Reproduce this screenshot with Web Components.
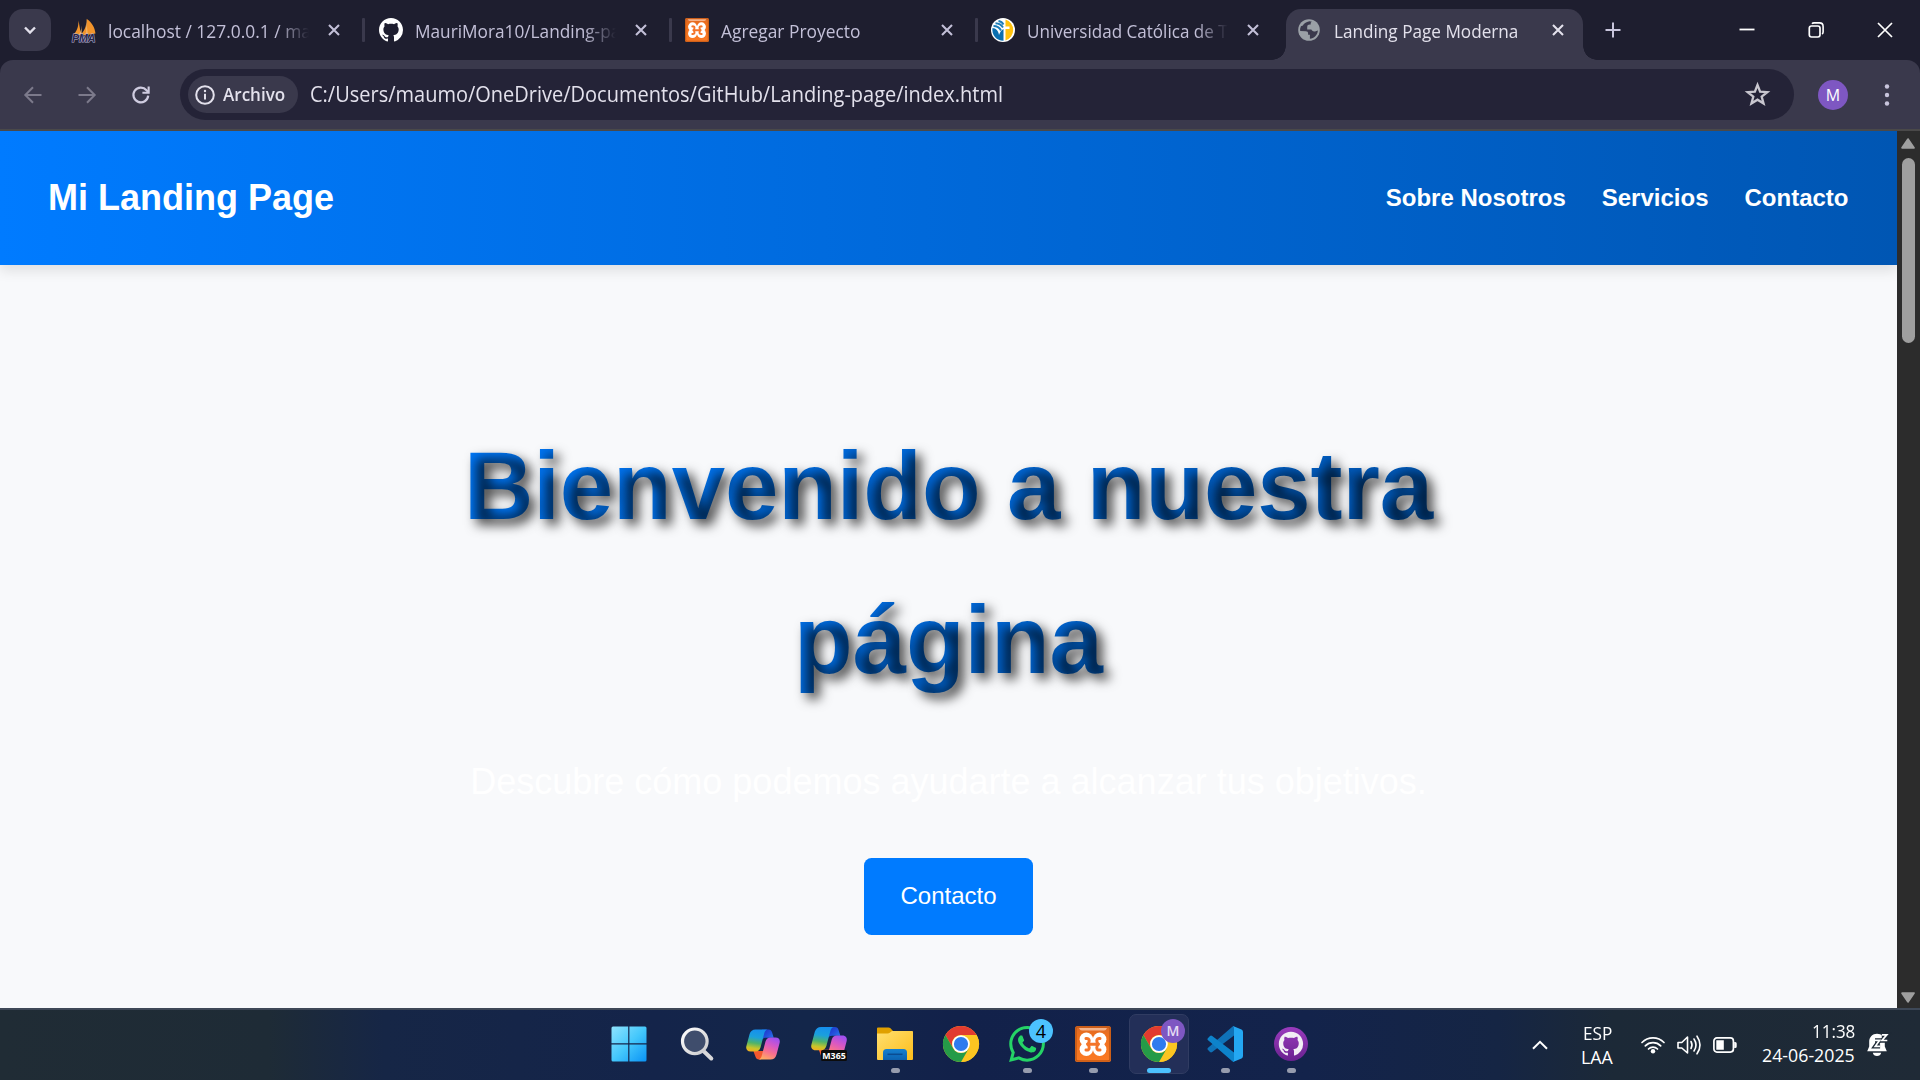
<!DOCTYPE html>
<html lang="es">
<head>
<meta charset="utf-8">
<title>Landing Page Moderna</title>
<style>
html,body{margin:0;height:100%;overflow:hidden;background:#1e1e2f}
body{font-family:"Open Sans","Noto Sans",sans-serif}
</style>
</head>
<body>
<desktop-screen></desktop-screen>
<script>
const svg=(vb,body)=>`<svg viewBox="${vb}" width="100%" height="100%" fill="none">${body}</svg>`;
const GH='<path fill="currentColor" d="M8 0C3.58 0 0 3.58 0 8c0 3.54 2.29 6.53 5.47 7.59.4.07.55-.17.55-.38 0-.19-.01-.82-.01-1.49-2.01.37-2.53-.49-2.69-.94-.09-.23-.48-.94-.82-1.13-.28-.15-.68-.52-.01-.53.63-.01 1.08.58 1.23.82.72 1.21 1.87.87 2.33.66.07-.52.28-.87.51-1.07-1.78-.2-3.64-.89-3.64-3.95 0-.87.31-1.59.82-2.15-.08-.2-.36-1.02.08-2.12 0 0 .67-.21 2.2.82.64-.18 1.32-.27 2-.27.68 0 1.36.09 2 .27 1.53-1.04 2.2-.82 2.2-.82.44 1.1.16 1.92.08 2.12.51.56.82 1.27.82 2.15 0 3.07-1.87 3.75-3.65 3.95.29.25.54.73.54 1.48 0 1.07-.01 1.93-.01 2.2 0 .21.15.46.55.38A8.013 8.013 0 0016 8c0-4.42-3.58-8-8-8z"/>';
const COPILOT=`<defs>
<linearGradient id="ca" x1=".5" y1="0" x2=".35" y2="1"><stop stop-color="#168fee"/><stop offset=".35" stop-color="#1ba0dc"/><stop offset=".62" stop-color="#4fb36a"/><stop offset=".85" stop-color="#c9c52a"/><stop offset="1" stop-color="#f0b020"/></linearGradient>
<linearGradient id="cb" x1=".7" y1="0" x2=".3" y2="1"><stop stop-color="#a050f0"/><stop offset=".35" stop-color="#d858c4"/><stop offset=".65" stop-color="#f8708e"/><stop offset="1" stop-color="#ffaa62"/></linearGradient>
<linearGradient id="cc" x1="0" y1="0" x2="1" y2="1"><stop stop-color="#1a2fc0"/><stop offset=".5" stop-color="#2450dc"/><stop offset="1" stop-color="#2a8af0"/></linearGradient></defs>
<path fill="url(#cc)" d="M16 0h6.500c2 0 3 1 3.600 3l1.600 5.200H20c-2.500 0-4.200 1.200-5 3.300z"/>
<path fill="#f4582e" d="M8 21.500h10l-3 8.500h-2c-2 0-3-1-3.600-3L7.500 22z"/>
<path fill="url(#ca)" d="M9.500 0h12c-2 .4-2.700 2-3.300 4L14.500 18c-.9 2.700-2.500 4-5 4h-5C1 22-.4 19.500.4 16.500L3.600 4.500C4.600 1.500 6.500 0 9.500 0z"/>
<path fill="url(#cb)" d="M24.500 30h-12c2-.4 2.700-2 3.300-4L19.500 12c.9-2.700 2.500-4 5-4h5c3.500 0 4.900 2.500 4.100 5.500L30.400 25.500c-1 3-2.900 4.500-5.900 4.500z"/>`;
const XAMPP=`<defs><linearGradient id="xg" x1="0" y1="0" x2="0" y2="1"><stop stop-color="#d9692a"/><stop offset=".25" stop-color="#ef6f1c"/><stop offset="1" stop-color="#fb7a24"/></linearGradient></defs>
<rect width="36" height="36" rx="2.500" fill="url(#xg)"/><rect x="1" y="1" width="34" height="34" rx="2" stroke="#c35a16" stroke-width="1.600"/><path d="M4 2h28q-1 2.500-3 2.500H7Q5 4.500 4 2z" fill="#f6b48a"/>
<g fill="#fff"><circle cx="11.300" cy="13.200" r="6.700"/><circle cx="24.700" cy="13.200" r="6.700"/><circle cx="11.300" cy="23.300" r="6.700"/><circle cx="24.700" cy="23.300" r="6.700"/><path d="M8 12h20v12.500H8z"/></g>
<path d="M3.500 18.200l2 1.200v-2.400zM32.500 18.200l-2 1.200v-2.400z" fill="#f4752a"/>
<path d="M11 12.600q3.200-.4 3.200 2.200t-1.700 3.400q1.700 1 1.700 3.600T11 24M25 12.600q-3.200-.4-3.200 2.200t1.700 3.400q-1.700 1-1.700 3.600T25 24M13.500 18.200h9" stroke="#f4752a" stroke-width="3" stroke-linecap="round" stroke-linejoin="round"/>`;
const ICONS={
 chev:svg('0 0 14 14','<path d="M2 4.500l5 5 5-5" stroke="#e3e1ec" stroke-width="2.400"/>'),
 x:svg('0 0 12 12','<path d="M1 1l10 10M11 1L1 11" stroke="currentColor" stroke-width="2.100"/>'),
 wx:svg('0 0 16 16','<path d="M1 1l14 14M15 1L1 15" stroke="#fff" stroke-width="1.700"/>'),
 min:svg('0 0 16 16','<path d="M.5 7.500h15" stroke="#fff" stroke-width="1.800"/>'),
 restore:svg('0 0 16 16','<rect x="1.300" y="4" width="10.700" height="11" rx="2.200" stroke="#fff" stroke-width="1.700"/><path d="M4 1.700c.5-.6 1-.8 2-.8h5.500c2.200 0 3.600 1.500 3.600 3.600V10c0 1-.3 1.500-1 2" stroke="#fff" stroke-width="1.600"/>'),
 plus:svg('0 0 16 16','<path d="M8 .5v15M.5 8h15" stroke="#c8c5dc" stroke-width="2"/>'),
 back:svg('0 0 18 18','<path d="M17.500 9H1.500M9 1.300L1.300 9 9 16.700" stroke="#7c7a8b" stroke-width="2"/>'),
 fwd:svg('0 0 18 18','<path d="M.5 9h16M9 1.300L16.700 9 9 16.700" stroke="#7c7a8b" stroke-width="2"/>'),
 reload:svg('0 0 18 18','<path d="M16.200 9.700A7.400 7.400 0 1 1 14.500 4.200L16.500 6.300" stroke="#cfcce0" stroke-width="2.200"/><path d="M17.700.5v7.300h-7.300V5.700h5.200V.5z" fill="#cfcce0"/>'),
 info:svg('0 0 20 20','<circle cx="10" cy="10" r="8.800" stroke="#e3e1ec" stroke-width="2"/><path d="M10 8.700v5.800" stroke="#e3e1ec" stroke-width="2"/><circle cx="10" cy="6" r="1.200" fill="#e3e1ec"/>'),
 star:svg('0 0 24 24','<path d="M12 2.800l2.500 6.500 6.900.4-5.400 4.300 1.800 6.700L12 17l-5.800 3.700L8 14 2.600 9.700l6.900-.4z" stroke="#c9c7cf" stroke-width="2.200"/>'),
 dots:svg('0 0 6 24','<g fill="#c8c5dc"><circle cx="3" cy="3.500" r="2.200"/><circle cx="3" cy="12" r="2.200"/><circle cx="3" cy="20.500" r="2.200"/></g>'),
 gh:svg('0 0 16 16',GH),
 pma:svg('0 0 24 24','<path fill="#f2942b" d="M6.500 2.500C6.500 9 5 13 .8 17.500L9 16.500zM14 0c1 6-.6 12-5.500 17h6.500zM14.800 1c5 3.500 8 8 8.700 14.500L15 17z"/><path fill="#f9bd70" d="M9.500 4c.3 5-.3 9-2.500 13h2.600zM14.200 1v15.500h1.500z"/><text x="0" y="23.700" font-family="Liberation Sans" font-weight="700" font-style="italic" font-size="10" textLength="23.500" lengthAdjust="spacingAndGlyphs" fill="#27264c" stroke="#b5b3d0" stroke-width="1" paint-order="stroke">PMA</text>'),
 xampp:svg('0 0 36 36',XAMPP),
 uct:svg('0 0 24 24','<circle cx="12" cy="12" r="12" fill="#fff"/><path fill="#ffc20e" d="M14.500 1.500A11 11 0 0 1 14.500 22.500V11h4V8.500h-4z"/><path fill="#0a6fb0" d="M12.500 11v11.700A10.800 10.800 0 0 1 1.500 10c3.500 0 6 3 6.500 7 1-3 2.500-5 4.500-6z"/><path d="M2.500 8c3.500 0 6 1.500 7.500 4.500M4.500 5.300c3.500.2 6 1.700 7.500 4.200M7.500 3c2.500.4 4 1.600 5 3.500" stroke="#1d7db8" stroke-width="1.900"/>'),
 globe:svg('0 0 22 22','<circle cx="11" cy="11" r="10.800" fill="#9aa0a6"/><path fill="#3a394c" d="M11.500 2.300c-3.500.5-6 2.700-6.600 4.200l-2 .8A8.800 8.800 0 0 0 2.200 12l5.600.2c1.600.1 2.300.8 2.300 2.200v1.300h1.800v4c4.200-.3 7.600-3.700 8-8.200l-2.200.8c-1.400.4-2.700.2-3.700-.8l-.7-.9H9.200V8c.1-1.600 1-2.400 2.600-2.400h.9V4.200c0-1 .6-1.200 1.500-1.300-.9-.4-1.700-.6-2.700-.6z"/>'),
 win:svg('0 0 36 36','<defs><linearGradient id="w" x1="0" y1="0" x2="1" y2="1"><stop stop-color="#8fe3fd"/><stop offset=".5" stop-color="#45c8fc"/><stop offset="1" stop-color="#0a93f5"/></linearGradient></defs><path fill="url(#w)" d="M2 .5h15.200v16.800H.5V2Q.5.500 2 .5zM18.400.5H34q1.500 0 1.500 1.500v15.300H18.400zM.5 18.500h16.700v17H2Q.5 35.500.5 34zM18.400 18.500h17.100V34q0 1.500-1.500 1.500H18.400z"/>'),
 search:svg('0 0 34 34','<defs><linearGradient id="s" x1="0" y1="0" x2="1" y2="1"><stop stop-color="#fff"/><stop offset="1" stop-color="#c9c9cc"/></linearGradient></defs><path d="M23 23.500l8.300 8" stroke="#d8d8da" stroke-width="4" stroke-linecap="round"/><circle cx="14.800" cy="14.300" r="12.300" fill="#3f4d6c" stroke="url(#s)" stroke-width="3.200"/>'),
 copilot:svg('0 0 34 30',COPILOT),
 m365:svg('0 0 36 34',`<g transform="scale(1.060)">${COPILOT}</g><rect x="10" y="23" width="26" height="11" rx="1.500" fill="#0c0c0c"/><text x="11.300" y="31.800" font-family="Open Sans" font-weight="700" font-size="9.400" textLength="23.400" lengthAdjust="spacingAndGlyphs" fill="#fff">M365</text>`),
 folder:svg('0 0 36 34','<defs><linearGradient id="f" x1="0" y1="0" x2="1" y2="1"><stop stop-color="#ffdf70"/><stop offset="1" stop-color="#fdbd1a"/></linearGradient><linearGradient id="f2" x1="0" y1="0" x2="0" y2="1"><stop stop-color="#1580d0"/><stop offset="1" stop-color="#0c62b0"/></linearGradient></defs><path d="M0 1.500Q0 .5 1 .5h10.500q1.200 0 2 .8L16 4H34q2 0 2 2v10H0z" fill="#e0a000"/><path d="M0 6.500h10.500q1.500 0 2.600-.9L15 4H35q1 0 1 1v27q0 1-1 1H1q-1 0-1-1z" fill="url(#f)"/><path d="M6 33V25.500Q6 22 9.500 22h17q3.500 0 3.500 3.500V33z" fill="url(#f2)"/><path d="M10.500 27.300h15" stroke="#0a4c91" stroke-width="1.500"/>'),
 chrome:svg('0 0 36 36','<circle cx="18" cy="18" r="18" fill="#fcc521"/><path fill="#fcc521" d="M18 9h15.590A18 18 0 0 1 18 36l7.800-13.500z"/><path fill="#e23b30" d="M2.410 9A18 18 0 0 1 33.590 9H18a9 9 0 0 0-7.800 13.500z"/><path fill="#259b48" d="M2.410 9l7.790 13.500A9 9 0 0 0 25.800 22.500L18 36A18 18 0 0 1 2.410 9z"/><circle cx="18" cy="18" r="8.800" fill="#fff"/><circle cx="18" cy="18" r="7.100" fill="#2f7bee"/>'),
 wa:svg('0 0 24 24','<path fill="#25d366" d="M17.472 14.382c-.297-.149-1.758-.867-2.030-.967-.273-.099-.471-.148-.670.150-.197.297-.767.966-.940 1.164-.173.199-.347.223-.644.075-.297-.150-1.255-.463-2.390-1.475-.883-.788-1.480-1.761-1.653-2.059-.173-.297-.018-.458.130-.606.134-.133.298-.347.446-.520.149-.174.198-.298.298-.497.099-.198.050-.371-.025-.520-.075-.149-.669-1.612-.916-2.207-.242-.579-.487-.5-.669-.510-.173-.008-.371-.010-.570-.010-.198 0-.520.074-.792.372-.272.297-1.040 1.016-1.040 2.479 0 1.462 1.065 2.875 1.213 3.074.149.198 2.096 3.200 5.077 4.487.709.306 1.262.489 1.694.625.712.227 1.360.195 1.871.118.571-.085 1.758-.719 2.006-1.413.248-.694.248-1.289.173-1.413-.074-.124-.272-.198-.570-.347m-5.421 7.403h-.004a9.870 9.870 0 0 1-5.031-1.378l-.361-.214-3.741.982.998-3.648-.235-.374a9.860 9.860 0 0 1-1.510-5.260c.001-5.450 4.436-9.884 9.888-9.884 2.640 0 5.122 1.030 6.988 2.898a9.825 9.825 0 0 1 2.893 6.994c-.003 5.450-4.437 9.884-9.885 9.884m8.413-18.297A11.815 11.815 0 0 0 12.050 0C5.495 0 .160 5.335.157 11.892c0 2.096.547 4.142 1.588 5.945L.057 24l6.305-1.654a11.882 11.882 0 0 0 5.683 1.448h.005c6.554 0 11.890-5.335 11.893-11.893a11.821 11.821 0 0 0-3.480-8.413z"/>'),
 vsc:svg('0 0 36 36','<path fill="#0f72b8" d="M.8 23.800L3 26q1 .8 2.200 0L27 9.500V0q-1 0-2 1L.8 22q-.8.900 0 1.800z"/><path fill="#0d83cb" d="M.8 12.200Q0 13.100.8 14L25 35q1 1 2 1v-9.500L5.200 10Q4 9.200 3 10z"/><path fill="#24a7f2" d="M26 0l8.500 3.600Q36 4.300 36 6v24q0 1.700-1.500 2.400L26 36q1-.5 1-2V2q0-1.500-1-2z"/>'),
 ghd:svg('0 0 34 34',`<defs><linearGradient id="g" x1="0" y1="0" x2="0" y2="1"><stop stop-color="#9a3bbd"/><stop offset="1" stop-color="#6a2290"/></linearGradient></defs><circle cx="17" cy="17" r="17" fill="url(#g)"/><g transform="translate(4.800 4.800) scale(1.520)" color="#f2eef5">${GH}</g>`),
 up:svg('0 0 16 10','<path d="M1 8.800l7-7 7 7" stroke="#fff" stroke-width="2"/>'),
 wifi:svg('0 0 24 18','<g stroke="#fff" stroke-width="1.700" stroke-linecap="round"><path d="M1 6.500a15.500 15.500 0 0 1 22 0M4.300 9.800a10.800 10.800 0 0 1 15.400 0M7.500 13a6.400 6.400 0 0 1 9 0"/></g><circle cx="12" cy="15.300" r="2.200" fill="#fff"/>'),
 vol:svg('0 0 24 20','<g stroke="#fff" stroke-width="1.600" stroke-linecap="round" stroke-linejoin="round"><path d="M1 7.500h3.800L10.500 2v16l-5.700-5H1zM14 6.500q2 3.500 0 7M17 4q4 6 0 12M20 1.200q6 8.800 0 17.600"/></g>'),
 bat:svg('0 0 24 16','<rect x=".9" y=".9" width="19.500" height="14.200" rx="3" stroke="#fff" stroke-width="1.700"/><path d="M3.300 3.200h7.500v9.600H3.300zM21.200 5h1q1.500 0 1.500 1.500v3q0 1.500-1.500 1.500h-1z" fill="#fff"/>'),
 bell:svg('0 0 22 24','<path fill="#fff" d="M10 .8C5.500.8 2.200 4.300 2.200 8.500v5L.2 18.300h19.600l-2-4.800v-5C17.800 4 14.500.8 10 .8zM5.800 19.700h8.400q-.8 3.300-4.200 3.300t-4.200-3.300z"/><path d="M14.800 1.800h5l-4.800 5.700h5.300M8 7.300h4.600l-4.300 6h4.800" stroke="#1f2a36" stroke-width="4.300"/><path stroke="#fff" stroke-width="1.700" d="M14.800 1.800h5l-4.800 5.700h5.300M8 7.300h4.600l-4.300 6h4.800"/>')
};
const define=(name,html,setup)=>customElements.define(name,class extends HTMLElement{
  connectedCallback(){
    if(this.shadowRoot)return;
    this.attachShadow({mode:'open'}).innerHTML=typeof html==='function'?html(this):html;
    if(setup)setup(this);
  }
});

/* Icon: name, w, h */
define('ui-icon',e=>{const w=e.getAttribute('w'),h=e.getAttribute('h')||w;
 return `<style>:host{display:block;flex:none;width:${w}px;height:${h}px}svg{display:block;overflow:visible}</style>${ICONS[e.getAttribute('name')]}`});

/* Single text line condensed or widened to a given width */
define('fit-text',e=>`<style>:host{display:block;flex:none;width:${e.getAttribute('w')}px;white-space:nowrap}span{display:inline-block;transform-origin:0 50%}</style><span><slot></slot></span>`,
 e=>{const s=e.shadowRoot.querySelector('span');s.style.transform=`scaleX(${e.getAttribute('w')/s.offsetWidth})`});

define('browser-tab',e=>`<style>
:host{display:flex;align-items:center;flex:none;width:297px;height:51px;box-sizing:border-box;padding:0 22px 9px 14px;color:#c3c0d8;font-size:18px;line-height:24px;position:relative}
:host([active]){background:#3a394c;border-radius:15px 15px 0 0;color:#e3e1ec;padding-left:12px;padding-right:19px}
:host([active])::before,:host([active])::after{content:"";position:absolute;bottom:0;width:14px;height:14px}
:host([active])::before{left:-14px;background:radial-gradient(circle at 0 0,transparent 13.500px,#3a394c 14px)}
:host([active])::after{right:-14px;background:radial-gradient(circle at 100% 0,transparent 13.500px,#3a394c 14px)}
.t{flex:1;margin:2px 19px 0 12px;overflow:hidden}
:host([active]) .t{margin-left:14px}
:host([cut]) .t{-webkit-mask:linear-gradient(90deg,#000 84%,transparent 100%)}
</style><slot name="icon"></slot><div class="t"><slot></slot></div><ui-icon name="x" w="12"></ui-icon>`);

define('tab-strip',`<style>
:host{display:flex;height:60px;box-sizing:border-box;padding:9px 0 0 9px;background:#1e1e2f}
.s{width:42px;height:42px;border-radius:14px;background:#3a394c;display:flex;align-items:center;justify-content:center;margin-right:7px;flex:none}
.d{width:3px;height:24px;margin:9px 0 0;background:#3a394c;flex:none;border-radius:1px}
.plus{margin:13px 0 0 22px}
.w{display:flex;margin-left:auto;padding:13px 27px 0 0;gap:53px}
</style>
<div class="s"><ui-icon name="chev" w="14"></ui-icon></div>
<browser-tab cut style="width:304px"><ui-icon slot="icon" name="pma" w="24"></ui-icon><fit-text w="203">localhost / 127.0.0.1 / ma</fit-text></browser-tab>
<div class="d"></div>
<browser-tab cut style="width:304px"><ui-icon slot="icon" name="gh" w="24" style="color:#fff"></ui-icon><fit-text w="205">MauriMora10/Landing-pa</fit-text></browser-tab>
<div class="d"></div>
<browser-tab style="width:303px;padding-left:13px"><ui-icon slot="icon" name="xampp" w="24"></ui-icon><fit-text w="139">Agregar Proyecto</fit-text></browser-tab>
<div class="d"></div>
<browser-tab cut style="width:303px;padding-left:13px"><ui-icon slot="icon" name="uct" w="24"></ui-icon><fit-text w="201">Universidad Católica de T</fit-text></browser-tab>
<browser-tab active style="margin-left:5px"><ui-icon slot="icon" name="globe" w="22"></ui-icon><fit-text w="184">Landing Page Moderna</fit-text></browser-tab>
<ui-icon class="plus" name="plus" w="16"></ui-icon>
<div class="w"><ui-icon name="min" w="16"></ui-icon><ui-icon name="restore" w="16"></ui-icon><ui-icon name="wx" w="16"></ui-icon></div>`);

define('tool-bar',`<style>
:host{display:block;background:#1e1e2f}
.b{display:flex;align-items:center;height:71px;box-sizing:border-box;background:#3a394c;border-radius:13px 13px 0 0;border-bottom:2px solid #4a4949;padding:0 30px 0 24px}
.o{flex:1;display:flex;align-items:center;height:51px;margin:0 24px 0 30px;border-radius:26px;background:#242337;box-sizing:border-box;padding:0 24px 0 8px}
.c{display:flex;align-items:center;width:110px;height:37px;border-radius:19px;background:#3a394c;box-sizing:border-box;padding-left:7px;color:#e3e1ec;font-weight:600;font-size:17.600px;line-height:24px}
.u{margin:-2px 0 0 12px;color:#e3e1ec;font-size:21px;line-height:28px}
.a{width:30px;height:30px;border-radius:50%;background:#7e57c2;color:#fff;display:flex;align-items:center;justify-content:center;font-size:16px;line-height:20px}
</style><div class="b">
<ui-icon name="back" w="18"></ui-icon><ui-icon name="fwd" w="18" style="margin-left:36px"></ui-icon><ui-icon name="reload" w="18" style="margin-left:36px"></ui-icon>
<div class="o"><div class="c"><ui-icon name="info" w="20"></ui-icon><fit-text w="62" style="margin:-1px 0 0 8px">Archivo</fit-text></div>
<fit-text class="u" w="693">C:/Users/maumo/OneDrive/Documentos/GitHub/Landing-page/index.html</fit-text><ui-icon name="star" w="25" style="margin-left:auto"></ui-icon></div>
<div class="a">M</div><ui-icon name="dots" w="6" h="24" style="margin-left:36px"></ui-icon></div>`);

define('landing-header',`<style>
:host{display:flex;justify-content:space-between;align-items:center;height:134.400px;box-sizing:border-box;padding:0 48.500px 0 48px;background:linear-gradient(90deg,#007bff,#0056b3);box-shadow:0 6px 12px rgba(0,0,0,.1);color:#fff;font-weight:700;line-height:1.600;position:relative}
h1{margin:0;font-size:36px}
nav{display:flex;gap:36px;font-size:24px}
a{color:inherit}
</style><h1>Mi Landing Page</h1><nav><a>Sobre Nosotros</a><a>Servicios</a><a>Contacto</a></nav>`);

define('landing-hero',`<style>
:host{display:flex;flex-direction:column;align-items:center;padding-top:144px;line-height:1.600;text-align:center}
h2{margin:0 0 36px;width:1200px;font-size:96px;font-weight:700;letter-spacing:-.1px;background:linear-gradient(90deg,#007bff,#0056b3);-webkit-background-clip:text;background-clip:text;-webkit-text-fill-color:transparent;text-shadow:6px 6px 12px rgba(0,0,0,.7)}
p{margin:0 0 48px;font-size:36px;color:#fff}
a{display:block;background:#007bff;color:#fff;font-size:24px;padding:19.200px 36px;border-radius:7.500px}
</style><h2>Bienvenido a nuestra página</h2><p>Descubre cómo podemos ayudarte a alcanzar tus objetivos.</p><a>Contacto</a>`);

define('scroll-bar',`<style>
:host{display:flex;flex-direction:column;align-items:center;width:23px;flex:none;background:#2c2c2c;box-sizing:border-box;padding:7px 1px 5px 0}
i{width:13px;height:185px;border-radius:6.500px;background:#9f9f9f;margin:9px 0 auto}
svg{display:block}
</style><svg width="14" height="11" viewBox="0 0 14 11"><path d="M7 1.200L12.800 9.800H1.200z" fill="#9f9f9f" stroke="#9f9f9f" stroke-width="2" stroke-linejoin="round"/></svg><i></i><svg width="14" height="11" viewBox="0 0 14 11"><path d="M7 9.800L12.800 1.200H1.200z" fill="#9f9f9f" stroke="#9f9f9f" stroke-width="2" stroke-linejoin="round"/></svg>`);

define('web-view',`<style>
:host{display:flex;flex:1;min-height:0}
main{flex:1;overflow:hidden;background:#f8f9fb;font-family:"Liberation Sans",Arial,sans-serif}
</style><main><landing-header></landing-header><landing-hero></landing-hero></main><scroll-bar></scroll-bar>`);

define('task-app',`<style>
:host{display:flex;align-items:center;justify-content:center;width:66px;height:70px;position:relative}
.in{display:flex;align-items:center;justify-content:center;width:60px;height:60px;box-sizing:border-box;border:1px solid transparent;border-radius:7px;margin-bottom:2px}
:host([active]) .in{background:#232f58;border-color:#303c62}
:host([open])::after,:host([active])::after{content:"";position:absolute;bottom:7px;left:50%;width:9px;height:5px;margin-left:-4.500px;border-radius:3px;background:#969cae}
:host([active])::after{width:24px;margin-left:-12px;background:#4cc2ff}
.bd{position:absolute;left:35px;top:9px}
</style><div class="in"><slot></slot></div><div class="bd"><slot name="badge"></slot></div>`);

define('app-badge',`<style>:host{display:flex;align-items:center;justify-content:center;width:24px;height:24px;border-radius:50%;font-size:16px;line-height:24px}</style><slot></slot>`);

define('task-bar',`<style>
:host{display:grid;grid-template-columns:1fr auto 1fr;height:72px;box-sizing:border-box;border-top:2px solid #3e4857;background:linear-gradient(90deg,#202c35 0,#1e2b36 14%,#162646 20%,#14244a 34%,#13264a 42%,#12214a 50%,#13234b 68%,#152544 78%,#1c2937 84%,#1f2a36 100%);color:#fff;font-size:17.800px;line-height:24px}
.apps{display:flex;padding-left:2px}
.tray{display:flex;align-items:center;justify-content:flex-end;padding-right:31px}
.r{display:flex;flex-direction:column;align-items:flex-end;margin-bottom:4px}
.c{display:flex;flex-direction:column;align-items:center}
</style><span></span>
<div class="apps">
<task-app><ui-icon name="win" w="36" style="margin-left:-4px"></ui-icon></task-app>
<task-app><ui-icon name="search" w="34"></ui-icon></task-app>
<task-app><ui-icon name="copilot" w="34" h="31"></ui-icon></task-app>
<task-app><ui-icon name="m365" w="36" h="34"></ui-icon></task-app>
<task-app open><ui-icon name="folder" w="36" h="34"></ui-icon></task-app>
<task-app><ui-icon name="chrome" w="36"></ui-icon></task-app>
<task-app open><ui-icon name="wa" w="36"></ui-icon><app-badge slot="badge" style="background:#4cc2ff;color:#000;font-size:18px">4</app-badge></task-app>
<task-app open><ui-icon name="xampp" w="36"></ui-icon></task-app>
<task-app active><ui-icon name="chrome" w="36"></ui-icon><app-badge slot="badge" style="background:#7e57c2;color:#e5dcf4;font-size:14px;font-weight:600">M</app-badge></task-app>
<task-app open><ui-icon name="vsc" w="36"></ui-icon></task-app>
<task-app open><ui-icon name="ghd" w="34"></ui-icon></task-app>
</div>
<div class="tray">
<ui-icon name="up" w="16" h="10"></ui-icon>
<div class="c" style="margin:0 0 1px 33px"><fit-text w="29">ESP</fit-text><fit-text w="32">LAA</fit-text></div>
<ui-icon name="wifi" w="24" h="18" style="margin-left:28px"></ui-icon>
<ui-icon name="vol" w="24" h="20" style="margin-left:12px"></ui-icon>
<ui-icon name="bat" w="24" h="16" style="margin-left:12px"></ui-icon>
<div class="r" style="margin-left:25px"><fit-text w="43">11:38</fit-text><fit-text w="93">24-06-2025</fit-text></div>
<ui-icon name="bell" w="22" h="24" style="margin-left:12px"></ui-icon>
</div>`);

define('desktop-screen',`<style>:host{display:flex;flex-direction:column;width:1920px;height:1080px;overflow:hidden}</style><tab-strip></tab-strip><tool-bar></tool-bar><web-view></web-view><task-bar></task-bar>`);
</script>
</body>
</html>
